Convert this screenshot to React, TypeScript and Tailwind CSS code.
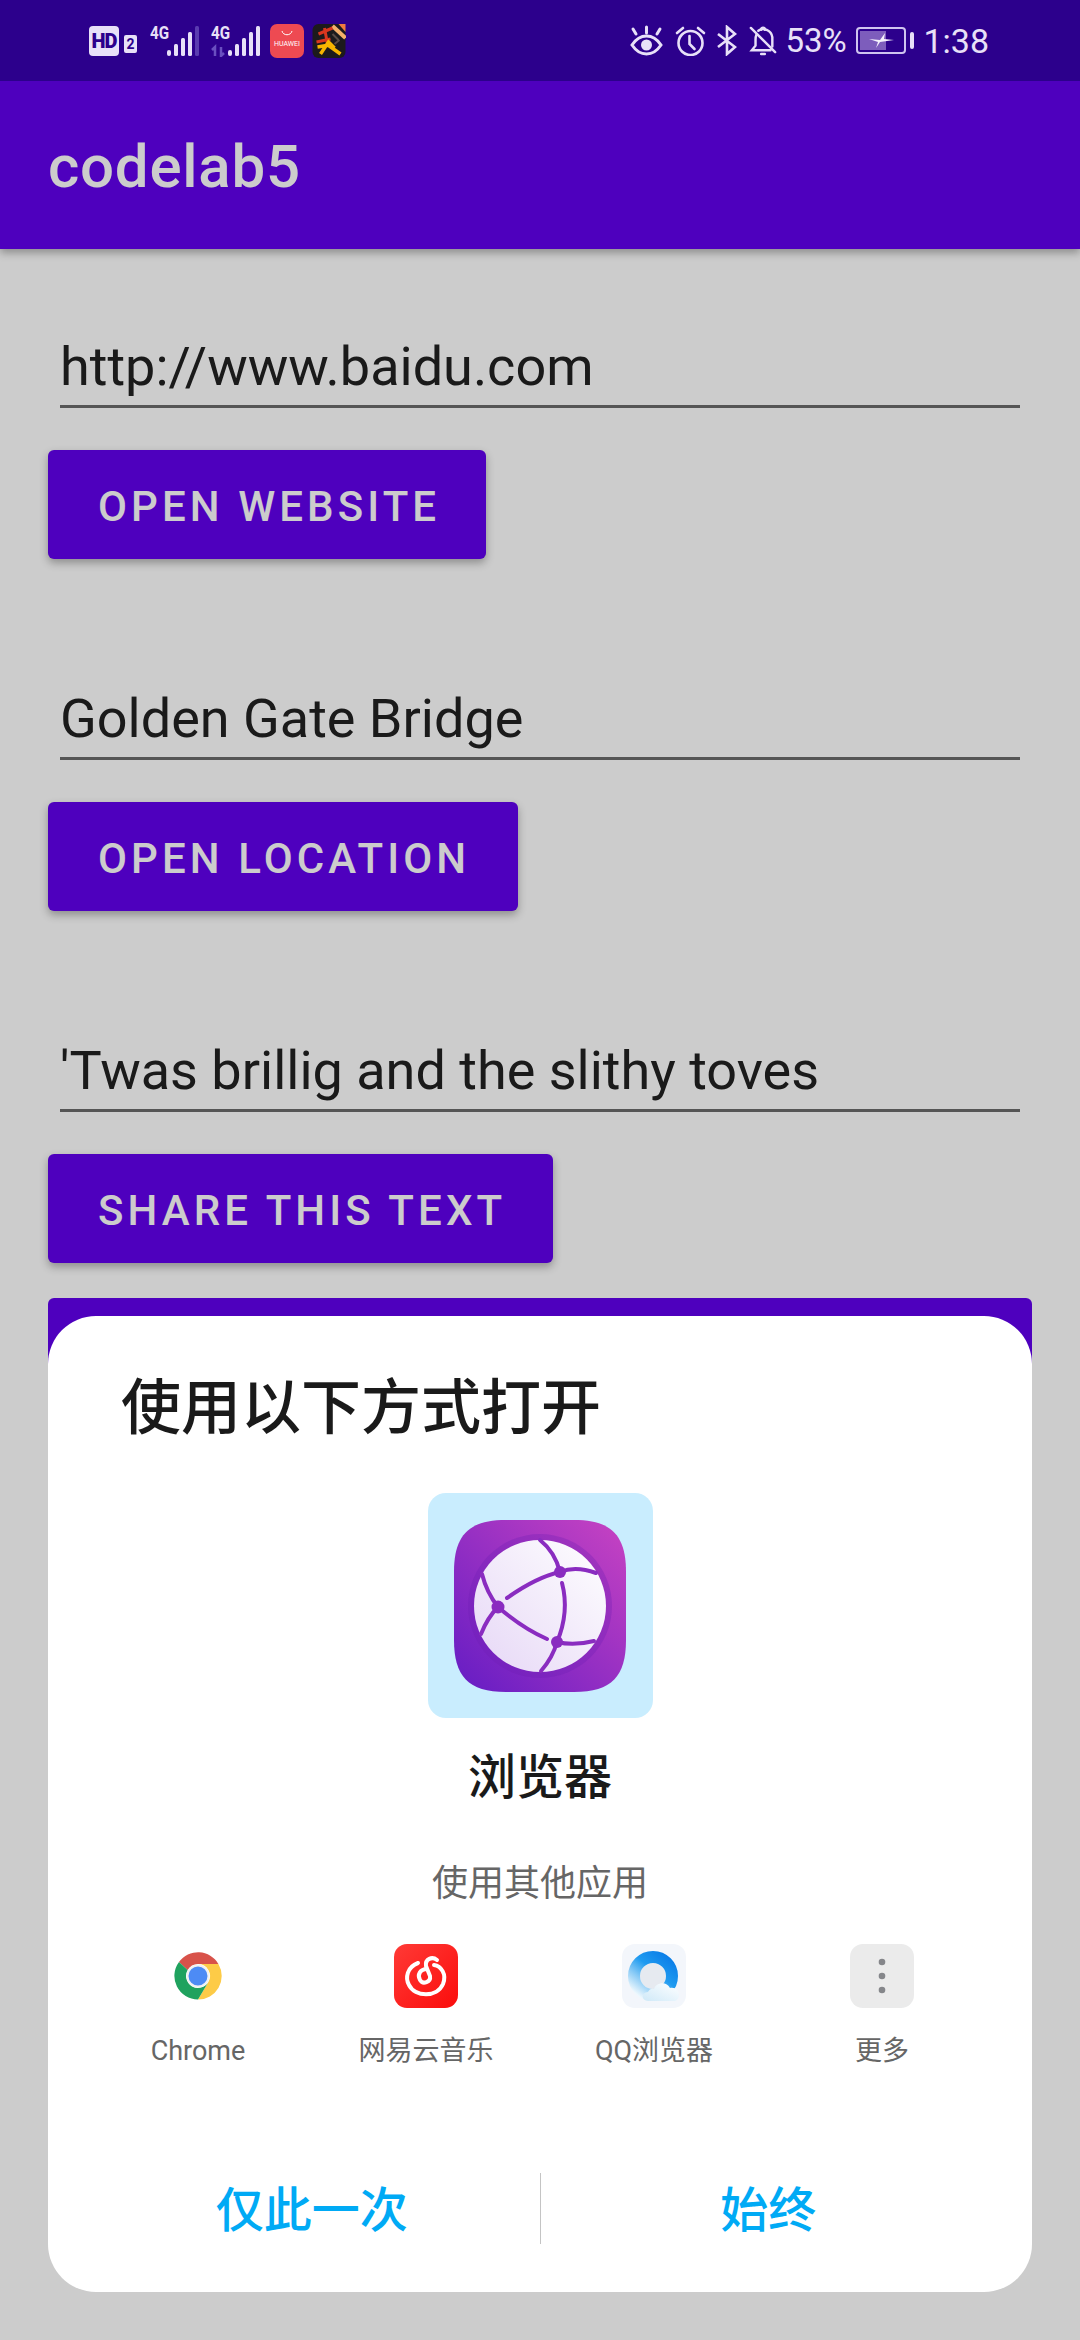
const cjk = "font-['Roboto','Noto_Sans_CJK_SC',sans-serif]";

function Signal({ dim, arrows }: { dim?: boolean; arrows?: boolean }) {
  return (
    <div className="relative w-[49px] h-[32px]">
      <span className="absolute left-0 top-[-2px] text-[19px] leading-[20px] font-bold scale-x-[0.8] origin-left text-[#e8e0f8]">4G</span>
      <svg className="absolute inset-0" width="49" height="32" viewBox="0 0 49 32">
        <rect x="17" y="25" width="4" height="6" rx="2" fill="#e8e0f8" />
        <rect x="24" y="19" width="4" height="12" rx="1.5" fill="#e8e0f8" />
        <rect x="31" y="13" width="4" height="18" rx="1.5" fill="#e8e0f8" />
        <rect x="38" y="7" width="4" height="24" rx="1.5" fill="#e8e0f8" />
        <rect x="45" y="1" width="4" height="30" rx="1.5" fill={dim ? "#5a3bb0" : "#e8e0f8"} />
        {arrows && <path d="M4 31v-9l-3 3M10 22v9l3-3" stroke="#6a4fc0" strokeWidth="2.5" fill="none" />}
      </svg>
    </div>
  );
}

function StatusBar() {
  return (
    <div className={`relative z-20 h-[81px] bg-[#2c008c] flex items-center pl-[89px] pr-[91px] text-[#e8e0f8] ${cjk}`}>
      <div className="w-[30px] h-[30px] rounded-[4px] bg-[#e8e0f8] text-[#2c008c] text-[20px] font-black leading-[30px] text-center tracking-[-1px] mt-[1px]">HD</div>
      <div className="ml-[5px] mt-[7px] w-[13px] h-[18px] bg-[#e8e0f8] rounded-[2px] text-[#2c008c] text-[14px] font-bold leading-[18px] text-center">2</div>
      <div className="ml-[13px]"><Signal dim /></div>
      <div className="ml-[12px]"><Signal arrows /></div>
      <div className="ml-[10px] w-[34px] h-[34px] rounded-[7px] bg-[#ee4a52] flex flex-col items-center">
        <svg width="14" height="7" viewBox="0 0 14 7" className="mt-[6px]">
          <path d="M2 1c1 5 9 5 10 0" stroke="#fff" strokeWidth="1" fill="none" />
        </svg>
        <span className="text-[7px] leading-[8px] mt-[3px] text-white">HUAWEI</span>
      </div>
      <svg className="ml-[8px]" width="34" height="34" viewBox="0 0 33 34">
        <rect width="33" height="34" rx="6" fill="#1c1a1c" />
        <path d="M26 0l7 0v8z" fill="#ef7b3e" />
        <path d="M20 2l13 12" stroke="#f5b06a" strokeWidth="4" />
        <path d="M6 10l14-6M12 4l3 16M4 18l14-3" stroke="#d8361f" strokeWidth="3" fill="none" />
        <path d="M8 30l8-12 6 6M5 23l12-2M14 20l14 10" stroke="#f7b500" strokeWidth="3.5" fill="none" />
        <path d="M20 10l6 6M22 20l5-4" stroke="#5a4a45" strokeWidth="2" fill="none" />
      </svg>

      <div className="ml-auto flex items-center">
        <svg width="33" height="31" viewBox="0 0 33 31" fill="none" stroke="#e8e0f8" strokeWidth="3" strokeLinecap="round">
          <path d="M2 20c8-12 21-12 29 0-8 12-21 12-29 0z" />
          <circle cx="16.5" cy="20" r="5.5" fill="#e8e0f8" stroke="none" />
          <path d="M16.5 2v6M3 4l3 5M30 4l-3 5" />
        </svg>
        <svg className="ml-[12px]" width="31" height="31" viewBox="0 0 30 31" fill="none" stroke="#e8e0f8" strokeWidth="2.6" strokeLinecap="round">
          <circle cx="15" cy="18" r="12" />
          <path d="M14 11v8l5 5M1.5 8l6-5M28.5 8l-6-5" />
        </svg>
        <svg className="ml-[11px]" width="20" height="31" viewBox="0 0 20 31" fill="none" stroke="#e8e0f8" strokeWidth="2.6">
          <path d="M1 9l17 13-8 7V2l8 7L1 22" />
        </svg>
        <svg className="ml-[12px]" width="28" height="32" viewBox="0 0 30 32" fill="none" stroke="#e8e0f8" strokeWidth="2.6" strokeLinecap="round">
          <path d="M2 2l26 26" />
          <path d="M8 9c-1 2-1 4-1 6v6l-4 5h20M10 5c5-4 14-1 15 7v10" />
          <path d="M13 30h4" />
          <path d="M13 4c0-3 4-3 4 0" />
        </svg>
        <span className="ml-[8px] text-[33px] leading-[40px] w-[62px]">53%</span>
        <div className="ml-[9px] relative w-[50px] h-[27px] rounded-[4px] border-2 border-[#cfc4ef] overflow-hidden">
          <div className="absolute left-[2px] top-[2px] bottom-[2px] w-[26px] bg-[#7d5dbc]" />
          <svg className="absolute left-[11px] top-[3px]" width="26" height="17" viewBox="0 0 26 17">
            <path d="M0 7l11 1 5-7-1 6 10 1-14 2-4 6 2-6z" fill="#f4f0fc" />
          </svg>
        </div>
        <div className="ml-[4px] w-[4px] h-[17px] rounded-[2px] bg-[#e8e0f8]" />
        <span className="ml-[9px] text-[34px] leading-[40px]">1:38</span>
      </div>
    </div>
  );
}

function Field({ text }: { text: string }) {
  return (
    <div className="mx-3 h-[78px] border-b-[3px] border-[#6b6b6b] text-[54px] leading-[74px] text-[#212121]">
      {text}
    </div>
  );
}

function Button({ label, className }: { label: string; className: string }) {
  return (
    <div className={`h-[109px] rounded-[6px] bg-[#6200ee] text-white text-[42px] font-medium tracking-[4.1px] uppercase leading-[113px] pl-[50px] shadow-[0_4px_8px_rgba(0,0,0,0.3)] ${className}`}>
      {label}
    </div>
  );
}

function BrowserIcon() {
  return (
    <div className="w-[225px] h-[225px] rounded-[18px] bg-[#c9edfe] flex items-center justify-center">
      <svg width="172" height="172" viewBox="0 0 172 172">
        <defs>
          <linearGradient id="bg" x1="0" y1="1" x2="1" y2="0">
            <stop offset="0" stopColor="#641cc4" />
            <stop offset="1" stopColor="#c843c2" />
          </linearGradient>
          <linearGradient id="ball" x1="0" y1="1" x2="1" y2="0">
            <stop offset="0" stopColor="#e6d7f6" />
            <stop offset="1" stopColor="#ffffff" />
          </linearGradient>
        </defs>
        <path d="M52 0h68c38 0 52 16 52 52v68c0 36-14 52-52 52H52C14 172 0 156 0 120V52C0 16 14 0 52 0z" fill="url(#bg)" />
        <circle cx="86" cy="86" r="72" fill="#6c1fb4" fillOpacity="0.3" />
        <circle cx="86" cy="86" r="66" fill="url(#ball)" />
        <g fill="none" stroke="#8a2cc0" strokeWidth="4" strokeLinecap="round">
          <path d="M86 20c10 8 17 20 20 32 12-5 25-3 36 1" />
          <path d="M106 52C88 56 70 66 53 78" />
          <path d="M28 54c3 12 9 24 16 33-7 7-13 17-17 27" />
          <path d="M44 87c15 13 31 24 49 32" />
          <path d="M108 63c5 19 3 40-5 59 12 3 25 2 37-1" />
          <path d="M103 122c-3 11-9 21-16 29" />
        </g>
        <circle cx="106" cy="52" r="6" fill="#8a2cc0" />
        <circle cx="44" cy="87" r="6.5" fill="#8a2cc0" />
        <circle cx="103" cy="122" r="6" fill="#8a2cc0" />
      </svg>
    </div>
  );
}

function ChromeIcon() {
  return (
    <svg width="48" height="48" viewBox="0 0 48 48" className="my-2">
      <path d="M5 10A23.5 23.5 0 0 1 44.4 12H24A12 12 0 0 0 13.6 18Z" fill="#d8524a" />
      <path d="M44.4 12A23.5 23.5 0 0 1 24 47.5L34.4 30A12 12 0 0 0 24 12Z" fill="#fdcb47" />
      <path d="M5 10A23.5 23.5 0 0 0 24 47.5L34.4 30A12 12 0 0 1 13.6 18Z" fill="#1fa25e" />
      <circle cx="24" cy="24" r="10.5" fill="#4d8bf5" stroke="#f1f1f1" strokeWidth="2" />
    </svg>
  );
}

function NeteaseIcon() {
  return (
    <svg width="64" height="64" viewBox="0 0 64 64">
      <defs>
        <linearGradient id="red" x1="0" y1="0" x2="1" y2="1">
          <stop offset="0" stopColor="#ff3a36" />
          <stop offset="1" stopColor="#fb0d0c" />
        </linearGradient>
      </defs>
      <rect width="64" height="64" rx="13" fill="url(#red)" />
      <g fill="none" stroke="#fff" strokeWidth="4" strokeLinecap="round">
        <path d="M24 19C13 23 11 34 15 41c6 12 28 13 34-1 4-10-2-18-9-19" />
        <path d="M43 16c-5-4-12-1-11 6l4 10c1 6-7 9-10 4-3-5 0-11 7-11" />
      </g>
    </svg>
  );
}

function QQIcon() {
  return (
    <svg width="64" height="64" viewBox="0 0 64 64">
      <defs>
        <linearGradient id="qq" x1="0.1" y1="1" x2="0.9" y2="0">
          <stop offset="0" stopColor="#eef8fd" />
          <stop offset="0.3" stopColor="#8acbf6" />
          <stop offset="0.6" stopColor="#1f9bf0" />
          <stop offset="1" stopColor="#0c7fe8" />
        </linearGradient>
        <linearGradient id="cloud" x1="0" y1="1" x2="1" y2="0">
          <stop offset="0" stopColor="#cfe9f8" />
          <stop offset="1" stopColor="#ffffff" />
        </linearGradient>
      </defs>
      <rect width="64" height="64" rx="13" fill="#f3f6fb" />
      <circle cx="31" cy="32" r="13" fill="#e6eaf0" />
      <circle cx="31" cy="32" r="19" fill="none" stroke="url(#qq)" strokeWidth="12" />
      <path d="M26 57c-7 0-7-9 0-9 1-3 4-4 6-3 2-7 13-8 16-1 6-1 9 3 9 7 0 4-3 6-5 6z" fill="url(#cloud)" />
    </svg>
  );
}

function MoreIcon() {
  return (
    <svg width="64" height="64" viewBox="0 0 64 64">
      <rect width="64" height="64" rx="13" fill="#ebebeb" />
      <circle cx="32" cy="18" r="3.3" fill="#85868a" />
      <circle cx="32" cy="32" r="3.3" fill="#85868a" />
      <circle cx="32" cy="46" r="3.3" fill="#85868a" />
    </svg>
  );
}

function AppItem({ icon, label }: { icon: React.ReactNode; label: string }) {
  return (
    <div className="flex flex-col items-center">
      <div className="h-[64px] flex items-center justify-center">{icon}</div>
      <div className="mt-[23px] text-[27px] leading-[40px] text-[#666666]">{label}</div>
    </div>
  );
}

function Chooser() {
  return (
    <div className={`absolute z-20 left-[48px] top-[1316px] w-[984px] h-[976px] rounded-[48px] bg-white flex flex-col items-center ${cjk}`}>
      <div className="self-start pl-[73px] pt-[53px] text-[60px] leading-[80px] font-medium text-[#1a1a1a]">使用以下方式打开</div>
      <div className="mt-[44px]"><BrowserIcon /></div>
      <div className="mt-[30px] text-[48px] leading-[60px] font-medium text-[#1a1a1a]">浏览器</div>
      <div className="mt-[51px] text-[36px] leading-[50px] text-[#666666]">使用其他应用</div>
      <div className="mt-[35px] w-[912px] grid grid-cols-4">
        <AppItem icon={<ChromeIcon />} label="Chrome" />
        <AppItem icon={<NeteaseIcon />} label="网易云音乐" />
        <AppItem icon={<QQIcon />} label="QQ浏览器" />
        <AppItem icon={<MoreIcon />} label="更多" />
      </div>
      <div className="mt-[102px] w-[912px] h-[71px] flex items-center text-[48px] font-medium text-[#00aaf5]">
        <div className="flex-1 text-center mt-[4px]">仅此一次</div>
        <div className="w-px h-full bg-[#c4c4c4]" />
        <div className="flex-1 text-center mt-[4px]">始终</div>
      </div>
    </div>
  );
}

export default function App() {
  return (
    <div className="relative w-[1080px] h-[2340px] overflow-hidden bg-white font-['Roboto',sans-serif]">
      <StatusBar />
      <header className="h-[168px] bg-[#6200ee] text-white text-[60px] font-medium tracking-[0.75px] leading-[172px] pl-12 shadow-[0_4px_8px_rgba(0,0,0,0.3)]">
        codelab5
      </header>
      <main className="pt-[81px] px-12">
        <div>
          <Field text="http://www.baidu.com" />
          <Button label="Open Website" className="mt-[42px] w-[438px]" />
        </div>
        <div className="mt-[123px]">
          <Field text="Golden Gate Bridge" />
          <Button label="Open Location" className="mt-[42px] w-[470px]" />
        </div>
        <div className="mt-[123px]">
          <Field text="'Twas brillig and the slithy toves" />
          <Button label="Share This Text" className="mt-[42px] w-[505px]" />
        </div>
        {/* fourth button, mostly behind the chooser */}
        <div className="mt-[35px] h-[109px] rounded-[6px] bg-[#6200ee]" />
      </main>
      {/* scrim behind the chooser */}
      <div className="absolute inset-0 z-10 bg-black/20" />
      <Chooser />
    </div>
  );
}
